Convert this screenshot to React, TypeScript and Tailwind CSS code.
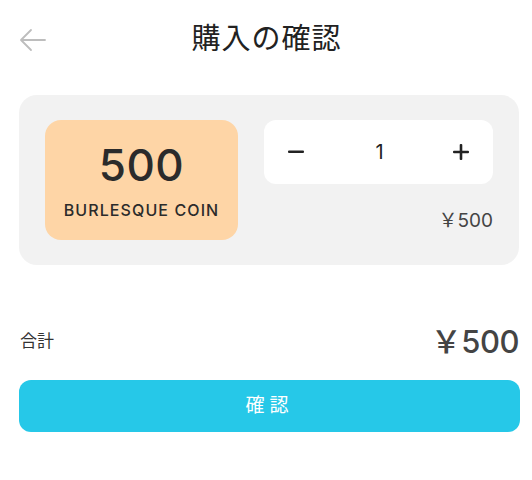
import React, { useState } from 'react';

const font = { fontFamily: 'Inter, "Noto Sans CJK JP", sans-serif' };

const App: React.FC = () => {
  const [qty, setQty] = useState(1);
  const price = 500;

  return (
    <div className="w-[532px] h-[480px] bg-white text-[#222]" style={font}>
      {/* HEADER */}
      <header className="relative h-[80px] flex items-center justify-center">
        <button className="absolute left-[19px] top-[27px] text-[#bdbdbd]">
          <svg width="28" height="26" viewBox="0 0 28 26" fill="none" stroke="currentColor" strokeWidth="1.8" strokeLinecap="round" strokeLinejoin="round">
            <path d="M26 13H3" />
            <path d="M12 3L2 13l10 10" />
          </svg>
        </button>
        <h1 className="text-[29px] leading-none tracking-[1px] text-[#222] -mt-[4px] ml-[1px]">購入の確認</h1>
      </header>

      <div className="px-[19px]">
        {/* CARD */}
        <div className="mt-[15px] w-[500px] h-[170px] rounded-[18px] bg-[#f2f2f2] flex px-[26px] pt-[25px] gap-[26px]">
          <div className="w-[193px] h-[120px] rounded-[16px] bg-[#fed5a6] flex flex-col items-center justify-center">
            <span className="text-[44px] leading-none font-medium text-[#2b2b2b] tracking-[0.5px]">500</span>
            <span className="mt-[15px] text-[16px] leading-none font-medium text-[#2b2b2b] tracking-[1.1px]">BURLESQUE COIN</span>
          </div>
          <div className="flex-1 flex flex-col">
            <div className="h-[64px] rounded-[12px] bg-white flex items-center justify-between px-[22px]">
              <button onClick={() => setQty(Math.max(1, qty - 1))} className="w-[20px] flex justify-center">
                <svg width="16" height="4" viewBox="0 0 16 4"><rect x="0" y="0.5" width="16" height="2.6" rx="1" fill="#222" /></svg>
              </button>
              <span className="text-[20px] leading-none text-[#222] ml-[2px]">{qty}</span>
              <button onClick={() => setQty(qty + 1)} className="w-[20px] flex justify-center">
                <svg width="16" height="16" viewBox="0 0 16 16"><rect x="0" y="6.7" width="16" height="2.6" rx="1" fill="#222" /><rect x="6.7" y="0" width="2.6" height="16" rx="1" fill="#222" /></svg>
              </button>
            </div>
            <div className="mt-[27px] text-right text-[19px] leading-none text-[#444]">￥{price * qty}</div>
          </div>
        </div>

        {/* TOTAL */}
        <div className="mt-[61px] w-[500px] flex items-center justify-between">
          <span className="text-[17px] text-[#333] ml-[1px]">合計</span>
          <span className="text-[31px] leading-none font-medium text-[#444] -tracking-[0.5px]">￥{price * qty}</span>
        </div>

        {/* CONFIRM */}
        <button className="mt-[23px] w-[501px] h-[52px] rounded-[12px] bg-[#26c8e8] text-white text-[19px] tracking-[5px] flex items-center justify-center">
          確認
        </button>
      </div>
    </div>
  );
};

export default App;
